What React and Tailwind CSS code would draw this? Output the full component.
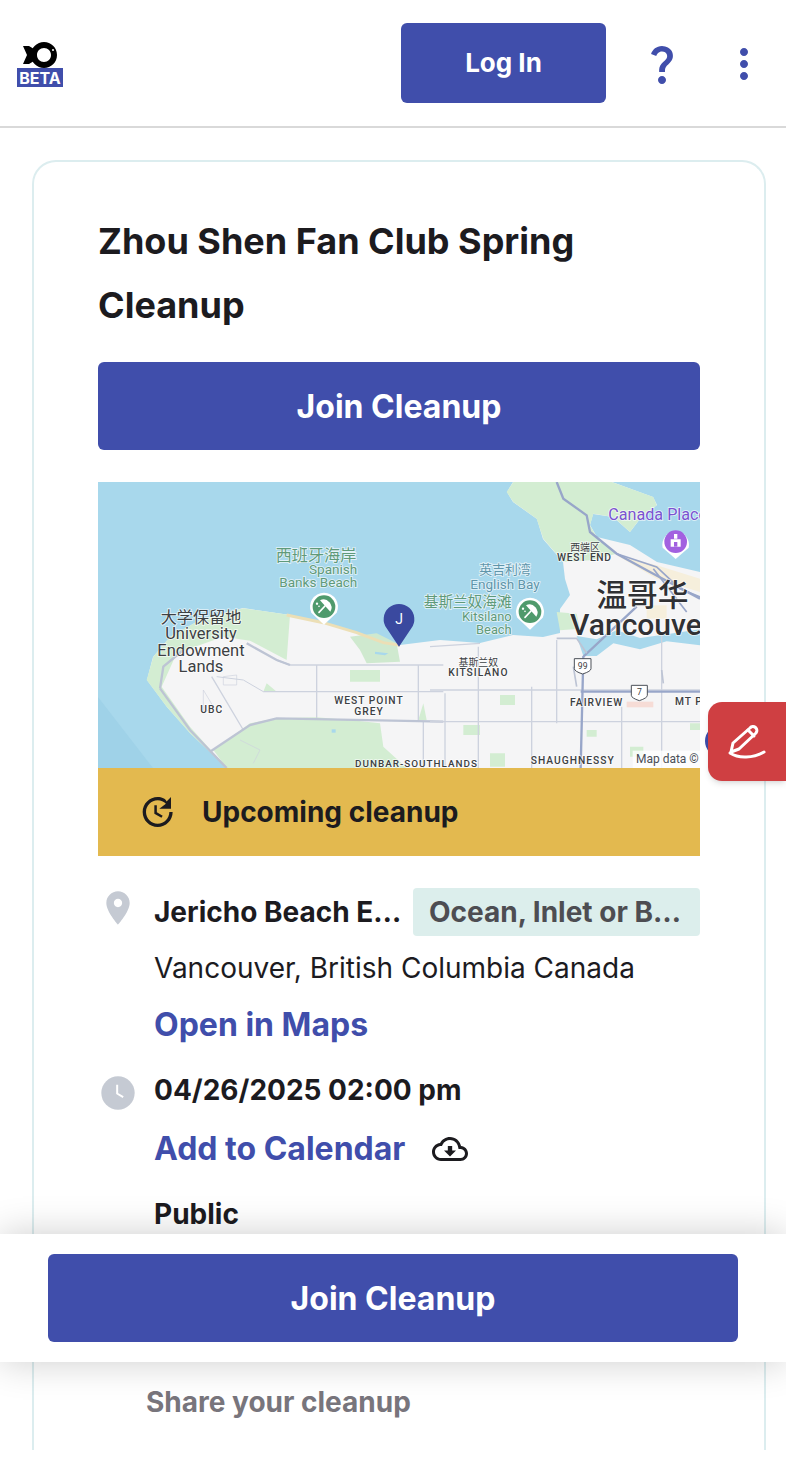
import React from 'react';

const MAP_FONT = "Roboto, 'Noto Sans CJK SC', sans-serif";

// label coords are in the same 3x space as the map groups below
const westLabels = [
  { t: '西班牙海岸', x: 678, y: 243, s: 44, c: '#5f9a7a' },
  { t: 'Spanish', x: 802, y: 283, s: 37, c: '#5f9a7a', a: 'end' },
  { t: 'Banks Beach', x: 802, y: 322, s: 37, c: '#5f9a7a', a: 'end' },
  { t: '大学保留地', x: 333, y: 428, s: 44, c: '#3c4043' },
  { t: 'University', x: 333, y: 478, s: 45, c: '#3c4043' },
  { t: 'Endowment', x: 333, y: 527, s: 45, c: '#3c4043' },
  { t: 'Lands', x: 333, y: 577, s: 45, c: '#3c4043' },
  { t: 'UBC', x: 365, y: 700, s: 28, c: '#3c4043', w: 500, ls: 3 },
  { t: 'WEST POINT', x: 837, y: 672, s: 28, c: '#3c4043', w: 500, ls: 3 },
  { t: 'GREY', x: 837, y: 704, s: 28, c: '#3c4043', w: 500, ls: 3 },
  { t: 'DUNBAR-SOUTHLANDS', x: 795, y: 861, s: 27, c: '#3c4043', w: 500, ls: 3, a: 'start' },
];

const eastLabels = [
  { t: 'Canada Place', x: 535, y: 120, s: 44, c: '#7a52d1', a: 'start' },
  { t: '西端区', x: 465, y: 212, s: 27, c: '#3c4043' },
  { t: 'WEST END', x: 463, y: 243, s: 28, c: '#3c4043', w: 500, ls: 2 },
  { t: '英吉利湾', x: 225, y: 283, s: 35, c: '#5f95aa' },
  { t: 'English Bay', x: 225, y: 326, s: 37, c: '#5f95aa' },
  { t: '基斯兰奴海滩', x: 245, y: 382, s: 40, c: '#5f9a7a', a: 'end' },
  { t: 'Kitsilano', x: 245, y: 422, s: 35, c: '#5f9a7a', a: 'end' },
  { t: 'Beach', x: 245, y: 462, s: 35, c: '#5f9a7a', a: 'end' },
  { t: '温哥华', x: 637, y: 378, s: 84, c: '#303134', w: 500 },
  { t: 'Vancouver', x: 420, y: 465, s: 82, c: '#303134', w: 500, a: 'start' },
  { t: '基斯兰奴', x: 145, y: 558, s: 27, c: '#3c4043' },
  { t: 'KITSILANO', x: 145, y: 587, s: 28, c: '#3c4043', w: 500, ls: 3 },
  { t: 'FAIRVIEW', x: 500, y: 677, s: 28, c: '#3c4043', w: 500, ls: 3 },
  { t: 'MT P', x: 735, y: 675, s: 28, c: '#3c4043', w: 500, ls: 3, a: 'start' },
  { t: 'SHAUGHNESSY', x: 428, y: 852, s: 28, c: '#3c4043', w: 500, ls: 3 },
];

const MapLabel = ({ t, x, y, s, c, w = 400, ls = 0, a = 'middle' }) => (
  <text
    x={x}
    y={y}
    fontSize={s * 1.1}
    fill={c}
    fontWeight={w}
    letterSpacing={ls}
    textAnchor={a}
    fontFamily={MAP_FONT}
    stroke="#ffffff"
    strokeOpacity="0.7"
    strokeWidth="5"
    paintOrder="stroke"
  >
    {t}
  </text>
);

const BeachPin = ({ x, y, color = '#4f9a6c' }) => (
  <g transform={`translate(${x} ${y})`}>
    <path d="M-38 18a42 42 0 1 1 76 0l-38 36z" fill="#ffffff" />
    <circle r="34" fill={color} />
    <path d="M-12 -19A24 24 0 0 1 19 15z" fill="#ffffff" />
    <path d="M3 -2L-15 17" stroke="#ffffff" strokeWidth="5" strokeLinecap="round" />
    <circle cx="-21" cy="-9" r="3.500" fill="#ffffff" />
    <circle cx="-15" cy="-1" r="2.500" fill="#ffffff" />
  </g>
);

const Shield = ({ x, y, w, label }) => (
  <g>
    <path
      d={`M${x - w / 2} ${y - 22}h${w}v30q0 8 -${w / 2} 16q-${w / 2} -8 -${w / 2} -16z`}
      fill="#ffffff"
      stroke="#4a4f57"
      strokeWidth="3"
    />
    <text x={x} y={y + 8} fontSize="26" textAnchor="middle" fill="#3c4043" fontFamily={MAP_FONT}>
      {label}
    </text>
  </g>
);

const MapPicture = () => (
  <svg viewBox="0 0 602 286" className="block h-[286px] w-full">
    <rect width="602" height="286" fill="#a8d8ec" />
    <path d="M0 215L55 286H0z" fill="#9fd2e8" />
    {/* land */}
    <path
      d="M129 286L92 251 69 225 49 198 55 175 72 155 102 138 145 126 192 133 225 141 259 150 285 161 302 163 342 158 382 161 415 153 445 155 462 151 462 127 472 113 467 97 465 80 445 57 439 37 415 20 409 10 415 0H514L555 15 559 23 542 37 532 50 515 35 495 32 492 43 499 55 532 63 559 80 602 90V286z"
      fill="#f5f5f6"
    />

    {/* west side, zoomed coords */}
    <g transform="translate(-8 -2) scale(0.33333)">
      <path
        d="M410 864L300 760 230 680 170 600 190 530 240 470 330 420 460 385 600 405 590 540 480 482 400 470 260 520 215 620 300 740 410 864z"
        fill="#d3edd2"
      />
      <path d="M370 810L480 730 560 715 680 712 800 722 870 730 880 800 950 864H410z" fill="#d3edd2" />
      <path d="M780 470L860 460 920 490 930 545 830 550 810 510z" fill="#cfe9cf" />
      <path d="M780 570H870V605H780zM530 610L560 635H520zM1000 670L1010 720H985z" fill="#d3edd2" />
      <path d="M590 405L700 428 800 458 880 488 930 496" fill="none" stroke="#ecdfb6" strokeWidth="9" />
      <path d="M855 515l40 5 -10 6 -30 -4z" fill="#a8d8ec" />
      <rect x="725" y="748" width="12" height="10" fill="#a8d8ec" />
      <g fill="none" stroke="#cdd2de" strokeWidth="5">
        <path d="M680 555V715M985 555V720M520 635H1060M1000 725V864M365 590L460 750" strokeWidth="4" />
        <path d="M560 540L600 555H1060" strokeWidth="5" />
        <path d="M380 590L460 600 520 635" strokeWidth="3" />
        <path d="M400 590l40 -5v30h-40zM340 630l30 50 -30 20zM450 780l60 30 -20 40" strokeWidth="2" />
      </g>
      <g fill="none" stroke="#bdc4d4" strokeWidth="7">
        <path d="M470 490L560 540 600 555" />
        <path d="M210 625L220 560 280 510" />
        <path d="M210 625L300 750 410 864" />
        <path d="M360 815L480 735 560 715 1060 725" />
      </g>
    </g>

    {/* stanley park, west end and downtown */}
    <g transform="translate(442 0) scale(0.33333)">
      <path
        d="M-80 0H215L340 45 350 70 300 110 270 150 220 105 160 95 150 130 170 165 230 215 150 235 70 240 10 170-10 110-80 60-100 30z"
        fill="#d3edd2"
      />
      <path d="M50 390L110 395 120 440 60 445z" fill="#d3edd2" />
      <path d="M230 220L350 250 480 290V330L350 290z" fill="#f6efdc" />
      <path d="M320 370H380V410H320z" fill="#f6efdc" />
      <path d="M110 462L170 472 230 445 300 468 370 458 480 442V490L380 478 300 502 220 484 170 522 130 522z" fill="#a8d8ec" />
      <g fill="none" stroke="#98a6c9" strokeWidth="7">
        <path d="M50 0L70 50 140 100 150 150 230 215 330 270 480 350" />
        <path d="M230 215L350 255 420 320 480 345" strokeWidth="5" />
        <path d="M340 260L440 390" strokeWidth="5" />
      </g>
    </g>

    {/* east side, zoomed coords */}
    <g transform="translate(332 -2) scale(0.33333)">
      <path d="M210 645H255V675H210zM100 735H150V765H100zM600 800H640V830H600zM780 730H810V750H780zM180 820H225V860H180zM470 750H500V770H470z" fill="#d3edd2" />
      <path d="M590 665H670V682H590z" fill="#f6dcd6" />
      <g fill="none" stroke="#cdd2de" strokeWidth="4">
        <path d="M0 630H810M0 725H810M145 500V864M305 620V864M380 480V730M575 680V864M695 460V864M45 640V860M0 500L150 490" />
      </g>
      <g fill="none" stroke="#98a6c9" strokeWidth="7">
        <path d="M620 380L460 530 452 864" />
        <path d="M452 635H810" />
      </g>
      <path d="M380 475H440L470 520M430 560L440 620M695 570L700 610" fill="none" stroke="#bdc4d4" strokeWidth="5" />
      <Shield x={458} y={558} w={50} label="99" />
      <Shield x={628} y={638} w={48} label="7" />
      <BeachPin x={300} y={395} />
      <g>
        <path d="M698 203a40 40 0 1 1 78 0l-39 34z" fill="#ffffff" />
        <circle cx="737" cy="185" r="34" fill="#a261e0" />
        <path d="M722 178h30v22h-30zM732 162h10v14h-10z" fill="#ffffff" />
        <rect x="732" y="186" width="10" height="14" fill="#a261e0" />
      </g>
      {eastLabels.map(l => <MapLabel key={l.t} {...l} />)}
      <rect x="608" y="812" width="202" height="52" fill="#ffffff" fillOpacity="0.8" />
      <text x="618" y="850" fontSize="36" fill="#4a4f57" fontFamily={MAP_FONT}>Map data ©</text>
    </g>

    <g transform="translate(-8 -2) scale(0.33333)">
      <BeachPin x={702} y={380} />
      <path d="M927 500L890 445a46 46 0 1 1 74 0z" fill="#3a499f" />
      <text x="927" y="433" fontSize="42" textAnchor="middle" fill="#ffffff" fontFamily={MAP_FONT}>J</text>
      {westLabels.map(l => <MapLabel key={l.t} {...l} />)}
    </g>
  </svg>
);

const Logo = () => (
  <div className="mt-[3px] flex w-[46px] flex-col items-center">
    <svg viewBox="0 0 34 26" className="block h-[26px] w-[34px]">
      <path d="M0 4h6l5 3v12l-5 3H0l4-9z" fill="#000000" />
      <path
        fillRule="evenodd"
        d="M21 0c7 0 13 5.500 13 13s-6 13-13 13S8 20.500 8 13 14 0 21 0zm0 6c-4 0-7 3-7 7s3 7 7 7 7-3 7-7-3-7-7-7z"
        fill="#000000"
      />
      <circle cx="30" cy="8" r="1" fill="#ffffff" />
    </svg>
    <div className="flex h-[19px] w-full items-center justify-center bg-[#404eab] text-[16px] leading-none font-bold text-white">
      BETA
    </div>
  </div>
);

const App = () => (
  <div className="relative h-[1482px] overflow-hidden bg-white font-['Inter',sans-serif] text-[#1c1b1f]">
    {/* top bar */}
    <header className="flex h-[128px] items-center border-b-2 border-[#d9d9d9] pr-[18px] pl-[17px]">
      <Logo />
      <button className="mr-[32px] ml-auto h-[80px] w-[205px] rounded-md bg-[#404eab] pb-[2px] text-[26px] font-bold text-white">
        Log In
      </button>
      <svg viewBox="0 0 24 24" className="mt-[2px] h-[48px] w-[48px]" fill="#404eab">
        <path d="M11.07 12.85c.77-1.39 2.25-2.21 3.11-3.44.91-1.29.4-3.7-2.18-3.7-1.69 0-2.52 1.28-2.87 2.34L6.54 6.96C7.25 4.83 9.18 3 11.99 3c2.35 0 3.96 1.07 4.78 2.41.7 1.15 1.11 3.3.03 4.9-1.2 1.77-2.35 2.31-2.97 3.45-.25.46-.35.76-.35 2.24h-2.89c-.01-.78-.13-2.05.48-3.15zM14 20c0 1.1-.9 2-2 2s-2-.9-2-2 .9-2 2-2 2 .9 2 2z" />
      </svg>
      <svg viewBox="0 0 24 24" className="mt-[2px] ml-[34px] h-[48px] w-[48px]" fill="#404eab">
        <path d="M12 8c1.100 0 2-.9 2-2s-.9-2-2-2-2 .9-2 2 .9 2 2 2zm0 2c-1.100 0-2 .9-2 2s.9 2 2 2 2-.9 2-2-.9-2-2-2zm0 6c-1.100 0-2 .9-2 2s.9 2 2 2 2-.9 2-2-.9-2-2-2z" />
      </svg>
    </header>

    {/* event card */}
    <main className="pt-[32px] pr-[20px] pl-[32px]">
      <section className="h-[1290px] overflow-hidden rounded-t-[24px] border-x-2 border-t-2 border-[#dcedef] pt-[47px] pr-[64px] pl-[64px]">
        <h1 className="text-[36px] leading-[64px] font-bold">Zhou Shen Fan Club Spring Cleanup</h1>

        <button className="mt-[25px] h-[88px] w-full rounded-md bg-[#404eab] pt-[2px] text-[32px] font-bold text-white">
          Join Cleanup
        </button>

        <div className="mt-[32px]">
          <MapPicture />
          <div className="flex h-[88px] items-center bg-[#e3b94f] pl-[38px]">
            <svg viewBox="0 0 24 24" className="h-[40px] w-[40px]" fill="#1c1b1f">
              <path d="M11 8v5l4.25 2.52.77-1.28-3.52-2.09V8H11zm10 2V3l-2.64 2.64C17.740 4.010 15.490 3 13 3c-4.970 0-9 4.030-9 9s4.030 9 9 9 9-4.030 9-9h-2c0 3.860-3.140 7-7 7s-7-3.140-7-7 3.140-7 7-7c1.930 0 3.680.79 4.950 2.050L14 10h7z" />
            </svg>
            <span className="ml-[26px] text-[28px] font-bold">Upcoming cleanup</span>
          </div>
        </div>

        {/* location */}
        <div className="mt-[32px] flex">
          <svg viewBox="0 0 24 24" className="h-[40px] w-[40px] shrink-0" fill="#c5cad3">
            <path d="M12 2C8.130 2 5 5.130 5 9c0 5.250 7 13 7 13s7-7.750 7-13c0-3.870-3.130-7-7-7zm0 9.500c-1.380 0-2.500-1.120-2.500-2.500s1.120-2.500 2.500-2.500 2.500 1.120 2.500 2.500-1.120 2.500-2.500 2.500z" />
          </svg>
          <div className="ml-[16px] min-w-0 flex-1">
            <div className="flex items-center justify-between">
              <span className="text-[28px] leading-[48px] font-bold">Jericho Beach E…</span>
              <span className="h-[48px] w-[287px] rounded bg-[#dceeec] pl-[16px] text-[28px] leading-[48px] font-bold text-[#4d4d52]">
                Ocean, Inlet or B…
              </span>
            </div>
            <p className="mt-[8px] text-[28px] leading-[48px]">Vancouver, British Columbia Canada</p>
            <a className="mt-[9px] block text-[32px] leading-[48px] font-bold text-[#404eab]">Open in Maps</a>
          </div>
        </div>

        {/* date */}
        <div className="mt-[17px] flex">
          <svg viewBox="0 0 24 24" className="mt-[7px] h-[40px] w-[40px] shrink-0">
            <circle cx="12" cy="12" r="10" fill="#c5cad3" />
            <path d="M11.500 7v5.300l3.600 2.200" fill="none" stroke="#ffffff" strokeWidth="1.200" />
          </svg>
          <div className="ml-[16px] min-w-0 flex-1">
            <p className="text-[28px] leading-[48px] font-bold">04/26/2025 02:00 pm</p>
            <div className="mt-[11px] flex items-center">
              <a className="text-[32px] leading-[48px] font-bold text-[#404eab]">Add to Calendar</a>
              <svg viewBox="0 0 24 24" className="ml-[27px] h-[36px] w-[36px]" fill="#1c1b1f">
                <path d="M19.350 10.040C18.670 6.590 15.640 4 12 4 9.110 4 6.600 5.640 5.350 8.040 2.340 8.360 0 10.910 0 14c0 3.310 2.690 6 6 6h13c2.760 0 5-2.240 5-5 0-2.640-2.050-4.780-4.650-4.960zM19 18H6c-2.210 0-4-1.790-4-4 0-2.050 1.530-3.760 3.560-3.970l1.070-.11.5-.95C8.080 7.140 9.940 6 12 6c2.620 0 4.880 1.860 5.390 4.430l.3 1.500 1.530.11c1.560.1 2.780 1.410 2.780 2.960 0 1.650-1.350 3-3 3zm-5.550-8h-2.900v3H8l4 4 4-4h-2.550z" />
              </svg>
            </div>
            <p className="mt-[17px] text-[28px] leading-[48px] font-bold">Public</p>
          </div>
        </div>

        <p className="mt-[140px] ml-[48px] text-[28px] leading-[48px] font-bold text-[#78757c]">Share your cleanup</p>
      </section>
    </main>

    {/* floating edit button */}
    <span className="absolute top-[725px] left-[705px] h-[32px] w-[40px] rounded-full bg-[#404eab]" />
    <button className="absolute top-[702px] left-[708px] flex h-[79px] w-[78px] items-center justify-center rounded-l-[14px] bg-[#cf3f42] shadow-md">
      <svg viewBox="0 0 40 40" className="h-[40px] w-[40px]" fill="none" stroke="#ffffff" strokeWidth="3" strokeLinecap="round" strokeLinejoin="round">
        <path d="M4 30l2-9L23 6a3.500 3.500 0 0 1 6 5L12 27z" />
        <path d="M21 8l6 6" />
        <path d="M3 31c9 6 23 5 34-1" />
      </svg>
    </button>

    {/* sticky join bar */}
    <div className="absolute top-[1234px] left-0 h-[128px] w-full bg-white px-[48px] pt-[20px] shadow-[0_0_36px_rgba(0,0,0,0.2)]">
      <button className="h-[88px] w-[690px] rounded-md bg-[#404eab] pt-[2px] text-[32px] font-bold text-white">
        Join Cleanup
      </button>
    </div>
  </div>
);

export default App;
